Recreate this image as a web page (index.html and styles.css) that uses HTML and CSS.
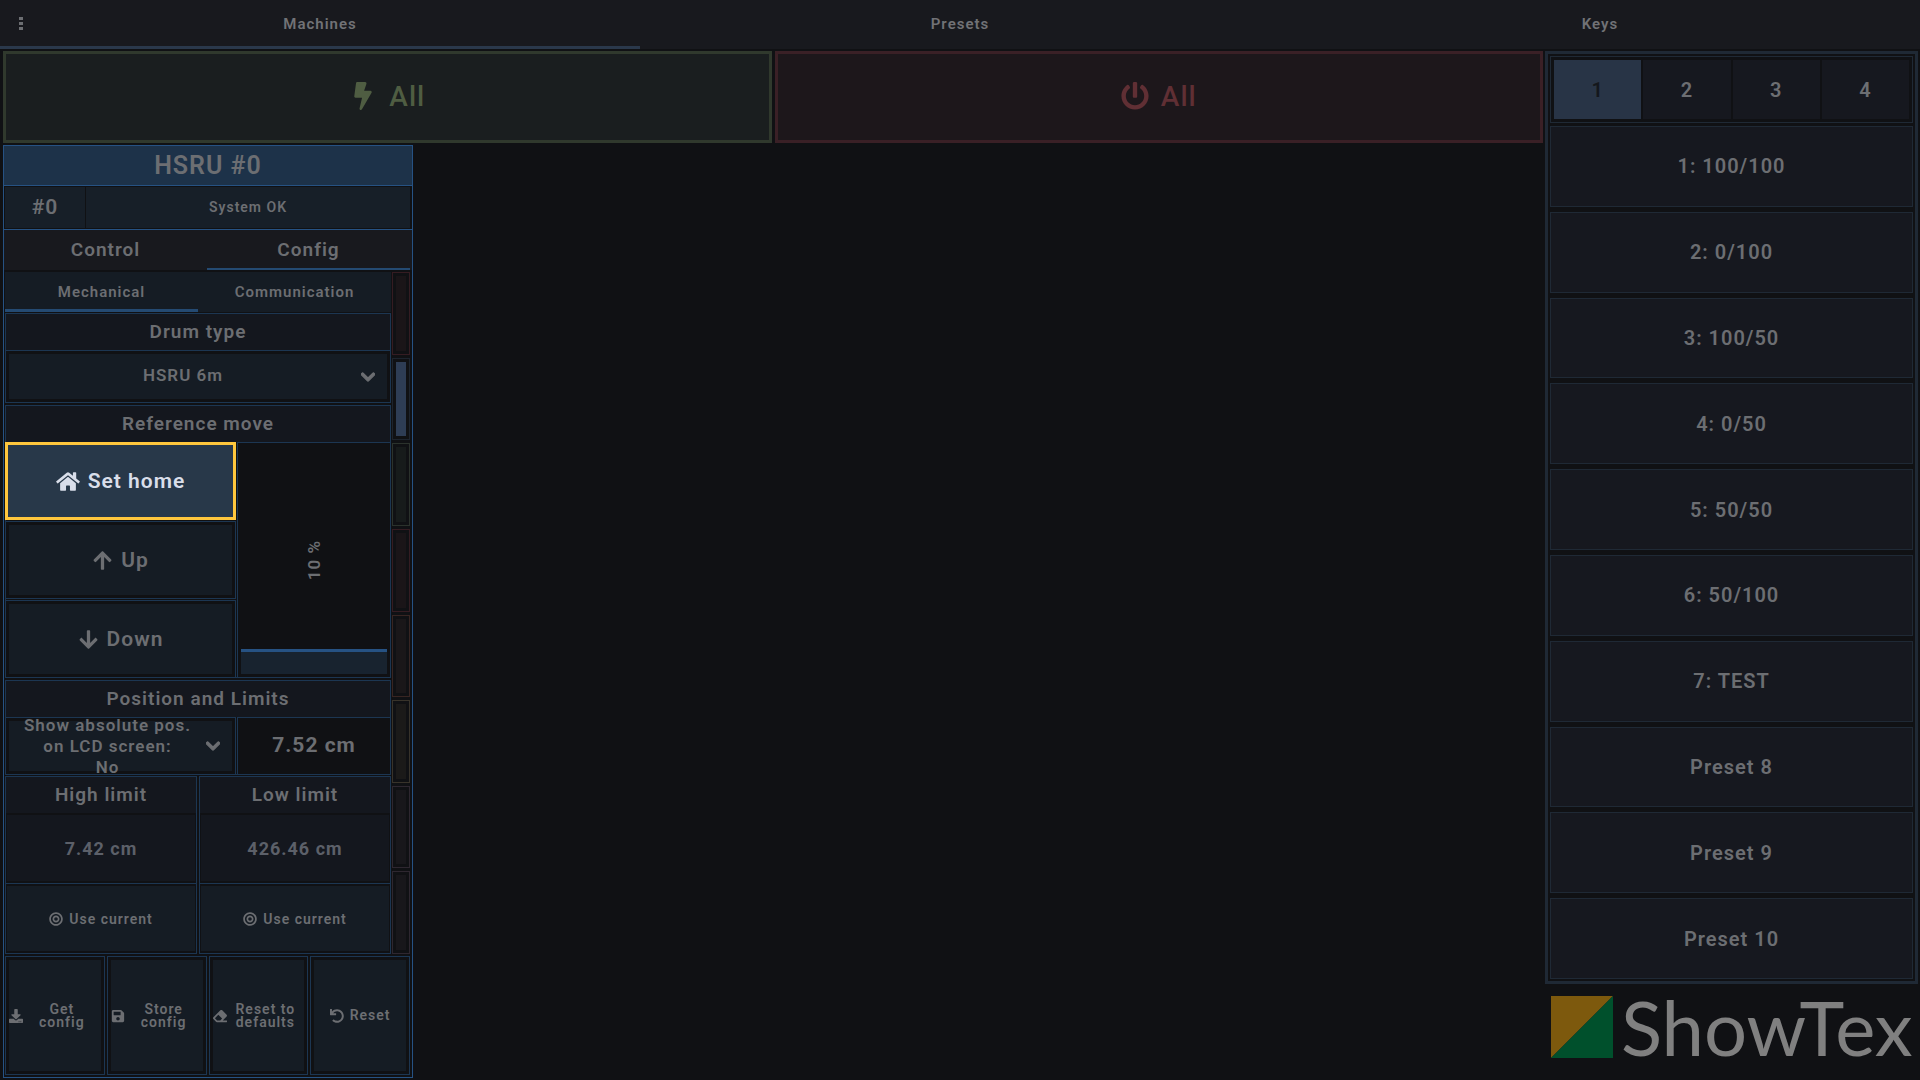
FILE: index.html
```html
<!DOCTYPE html>
<html lang="en">
<head>
    <meta charset="UTF-8">
    <meta name="viewport" content="width=device-width, initial-scale=1.0">
    <title>ShowTex</title>
    <link rel="stylesheet" href="styles.css">
</head>
<body>
    <svg class="sprite" aria-hidden="true">
        <symbol id="bolt" viewBox="0 0 320 512"><path d="M296 160H180.6l42.6-129.8C227.2 15 215.7 0 200 0H56C44 0 33.8 8.9 32.2 20.8l-32 240C-1.7 275.2 9.5 288 24 288h118.7L96.6 482.5c-3.6 15.2 8 29.5 23.3 29.5 8.4 0 16.4-4.4 20.8-12l176-304c9.3-15.9-2.2-36-20.7-36z"/></symbol>
        <symbol id="power" viewBox="0 0 512 512"><path d="M400 54.1c63 45 104 118.6 104 201.9 0 136.8-110.8 247.7-247.5 248C120 504.3 8.2 393 8 256.4 7.9 173.1 48.9 99.3 111.8 54.2c11.7-8.3 28-4.8 35 7.7L162.6 90c5.9 10.5 3.1 23.8-6.6 31-41.5 30.8-68 79.6-68 134.9-.1 92.3 74.5 168.1 168 168.1 91.6 0 168.6-74.2 168-169.1-.3-51.8-24.7-101.8-68.1-134-9.7-7.2-12.4-20.5-6.5-30.9l15.8-28.1c7-12.4 23.2-16.1 34.8-7.8zM296 264V24c0-13.3-10.7-24-24-24h-32c-13.3 0-24 10.7-24 24v240c0 13.3 10.7 24 24 24h32c13.3 0 24-10.7 24-24z"/></symbol>
        <symbol id="home" viewBox="0 0 576 512"><path d="M280.37 148.26L96 300.11V464a16 16 0 0 0 16 16l112.06-.29a16 16 0 0 0 15.92-16V368a16 16 0 0 1 16-16h64a16 16 0 0 1 16 16v95.64a16 16 0 0 0 16 16.05L464 480a16 16 0 0 0 16-16V300L295.67 148.26a12.19 12.19 0 0 0-15.3 0zM571.6 251.47L488 182.56V44.05a12 12 0 0 0-12-12h-56a12 12 0 0 0-12 12v72.61L318.47 43a48 48 0 0 0-61 0L4.34 251.47a12 12 0 0 0-1.6 16.9l25.5 31A12 12 0 0 0 45.15 301l235.22-193.74a12.19 12.19 0 0 1 15.3 0L530.9 301a12 12 0 0 0 16.9-1.6l25.5-31a12 12 0 0 0-1.7-16.93z"/></symbol>
        <symbol id="arrow-up" viewBox="0 0 448 512"><path d="M34.9 289.5l-22.2-22.2c-9.4-9.4-9.4-24.6 0-33.9L207 39c9.4-9.4 24.6-9.4 33.9 0l194.3 194.3c9.4 9.4 9.4 24.6 0 33.9L413 289.4c-9.5 9.5-25 9.3-34.3-.4L264 168.6V456c0 13.3-10.7 24-24 24h-32c-13.3 0-24-10.7-24-24V168.6L69.2 289.1c-9.3 9.8-24.8 10-34.3.4z"/></symbol>
        <symbol id="arrow-down" viewBox="0 0 448 512"><path d="M413.1 222.5l22.2 22.2c9.4 9.4 9.4 24.6 0 33.9L241 473c-9.4 9.4-24.6 9.4-33.9 0L12.7 278.6c-9.4-9.4-9.4-24.6 0-33.9l22.2-22.2c9.5-9.5 25-9.3 34.3.4L184 343.4V56c0-13.3 10.7-24 24-24h32c13.3 0 24 10.7 24 24v287.4l114.8-120.5c9.3-9.8 24.8-10 34.3-.4z"/></symbol>
        <symbol id="bullseye" viewBox="0 0 496 512"><path d="M248 8C111.03 8 0 119.03 0 256s111.03 248 248 248 248-111.03 248-248S384.97 8 248 8zm0 432c-101.69 0-184-82.29-184-184 0-101.69 82.29-184 184-184 101.69 0 184 82.29 184 184 0 101.69-82.29 184-184 184zm0-312c-70.69 0-128 57.31-128 128s57.31 128 128 128 128-57.31 128-128-57.31-128-128-128zm0 192c-35.29 0-64-28.71-64-64s28.71-64 64-64 64 28.71 64 64-28.71 64-64 64z"/></symbol>
        <symbol id="download" viewBox="0 0 512 512"><path d="M216 0h80c13.3 0 24 10.7 24 24v168h87.7c17.8 0 26.7 21.5 14.1 34.1L269.7 378.3c-7.5 7.5-19.8 7.5-27.3 0L90.1 226.1c-12.6-12.6-3.7-34.1 14.1-34.1H192V24c0-13.3 10.7-24 24-24zm296 376v112c0 13.3-10.7 24-24 24H24c-13.3 0-24-10.7-24-24V376c0-13.3 10.7-24 24-24h146.7l49 49c20.1 20.1 52.5 20.1 72.6 0l49-49H488c13.3 0 24 10.7 24 24zm-124 88c0-11-9-20-20-20s-20 9-20 20 9 20 20 20 20-9 20-20zm64 0c0-11-9-20-20-20s-20 9-20 20 9 20 20 20 20-9 20-20z"/></symbol>
        <symbol id="save" viewBox="0 0 448 512"><path d="M433.941 129.941l-83.882-83.882A48 48 0 0 0 316.118 32H48C21.49 32 0 53.49 0 80v352c0 26.51 21.49 48 48 48h352c26.51 0 48-21.49 48-48V163.882a48 48 0 0 0-14.059-33.941zM224 416c-35.346 0-64-28.654-64-64 0-35.346 28.654-64 64-64s64 28.654 64 64c0 35.346-28.654 64-64 64zm96-304.52V212c0 6.627-5.373 12-12 12H76c-6.627 0-12-5.373-12-12V108c0-6.627 5.373-12 12-12h228.52c3.183 0 6.235 1.264 8.485 3.515l3.48 3.48A11.996 11.996 0 0 1 320 111.48z"/></symbol>
        <symbol id="eraser" viewBox="0 0 512 512"><path d="M497.941 273.941c18.745-18.745 18.745-49.137 0-67.882l-160-160c-18.745-18.745-49.136-18.746-67.883 0l-256 256c-18.745 18.745-18.745 49.137 0 67.882l96 96A48.004 48.004 0 0 0 144 480h356c6.627 0 12-5.373 12-12v-40c0-6.627-5.373-12-12-12H355.883l142.058-142.059zm-302.627-62.627l137.373 137.373L265.373 416H150.628l-80-80 124.686-124.686z"/></symbol>
        <symbol id="undo" viewBox="0 0 512 512"><path d="M212.333 224.333H12c-6.627 0-12-5.373-12-12V12C0 5.373 5.373 0 12 0h48c6.627 0 12 5.373 12 12v78.112C117.773 39.279 184.26 7.47 258.175 8.007c136.906.994 246.448 111.623 246.157 248.532C504.041 393.258 393.12 504 256.333 504c-64.089 0-122.496-24.313-166.51-64.215-5.099-4.622-5.334-12.554-.467-17.42l33.967-33.967c4.474-4.474 11.662-4.717 16.401-.525C170.76 415.336 211.58 432 256.333 432c97.268 0 176-78.716 176-176 0-97.267-78.716-176-176-176-58.496 0-110.28 28.476-142.274 72.333h98.274c6.627 0 12 5.373 12 12v48c0 6.627-5.373 12-12 12z"/></symbol>
        <symbol id="chevron" viewBox="0 0 448 512"><path d="M207.029 381.476L12.686 187.132c-9.373-9.373-9.373-24.569 0-33.941l22.667-22.667c9.357-9.357 24.522-9.375 33.901-.04L224 284.505l154.745-154.021c9.379-9.335 24.544-9.317 33.901.04l22.667 22.667c9.373 9.373 9.373 24.569 0 33.941L240.971 381.476c-9.373 9.372-24.569 9.372-33.942 0z"/></symbol>
    </svg>

    <header class="topbar">
        <button type="button" class="menu-btn" aria-label="Menu">
            <svg class="dots" viewBox="0 0 4 14"><path d="M0 0h4v3H0zM0 5h4v3H0zM0 10h4v3H0z"/></svg>
        </button>
        <nav class="main-tabs">
            <button type="button" class="active">Machines</button>
            <button type="button">Presets</button>
            <button type="button">Keys</button>
        </nav>
    </header>

    <div class="layout">
        <main class="machines">
            <div class="all-row">
                <button type="button" class="all on"><svg class="icon"><use href="#bolt"/></svg>All</button>
                <button type="button" class="all off"><svg class="icon"><use href="#power"/></svg>All</button>
            </div>

            <section class="machine">
                <h2>HSRU #0</h2>
                <div class="status">
                    <span class="number">#0</span>
                    <span class="message">System OK</span>
                </div>
                <div class="tabs">
                    <button type="button">Control</button>
                    <button type="button" class="active">Config</button>
                </div>

                <div class="config">
                    <div class="settings">
                        <div class="subtabs">
                            <button type="button" class="active">Mechanical</button>
                            <button type="button">Communication</button>
                        </div>

                        <div class="group drum">
                            <h3><label for="drum-type">Drum type</label></h3>
                            <div class="dropdown">
                                <select id="drum-type">
                                    <option>HSRU 6m</option>
                                </select>
                                <svg class="chevron"><use href="#chevron"/></svg>
                            </div>
                        </div>

                        <div class="group reference">
                            <h3>Reference move</h3>
                            <div class="moves">
                                <div class="move-btns">
                                    <button type="button" class="cell highlight"><svg class="icon"><use href="#home"/></svg>Set home</button>
                                    <button type="button" class="cell"><svg class="icon"><use href="#arrow-up"/></svg>Up</button>
                                    <button type="button" class="cell"><svg class="icon"><use href="#arrow-down"/></svg>Down</button>
                                </div>
                                <div class="speed">
                                    <input type="range" id="speed" min="0" max="100" value="10">
                                    <label for="speed">10 %</label>
                                </div>
                            </div>
                        </div>

                        <div class="group position">
                            <h3>Position and Limits</h3>
                            <div class="position-row">
                                <div class="dropdown absolute-pos">
                                    <div class="field">
                                        <label for="absolute">Show absolute pos. on LCD screen:</label>
                                        <select id="absolute">
                                            <option>No</option>
                                            <option>Yes</option>
                                        </select>
                                    </div>
                                    <svg class="chevron"><use href="#chevron"/></svg>
                                </div>
                                <div class="current">7.52 cm</div>
                            </div>
                        </div>

                        <div class="limits">
                            <div class="limit">
                                <h3>High limit</h3>
                                <div class="value">7.42 cm</div>
                                <button type="button"><svg class="icon"><use href="#bullseye"/></svg>Use current</button>
                            </div>
                            <div class="limit">
                                <h3>Low limit</h3>
                                <div class="value">426.46 cm</div>
                                <button type="button"><svg class="icon"><use href="#bullseye"/></svg>Use current</button>
                            </div>
                        </div>
                    </div>

                    <div class="leds">
                        <span class="led red"></span>
                        <span class="led blue"></span>
                        <span class="led green"></span>
                        <span class="led red"></span>
                        <span class="led orange"></span>
                        <span class="led yellow"></span>
                        <span class="led purple"></span>
                        <span class="led purple"></span>
                    </div>
                </div>

                <div class="actions">
                    <button type="button" class="cell"><svg class="icon"><use href="#download"/></svg><span>Get config</span></button>
                    <button type="button" class="cell"><svg class="icon"><use href="#save"/></svg><span>Store config</span></button>
                    <button type="button" class="cell"><svg class="icon"><use href="#eraser"/></svg><span>Reset to defaults</span></button>
                    <button type="button" class="cell short"><svg class="icon"><use href="#undo"/></svg><span>Reset</span></button>
                </div>
            </section>
        </main>

        <aside class="side">
            <div class="presets">
                <div class="pages">
                    <button type="button" class="active">1</button>
                    <button type="button">2</button>
                    <button type="button">3</button>
                    <button type="button">4</button>
                </div>
                <div class="preset-list">
                    <button type="button">1: 100/100</button>
                    <button type="button">2: 0/100</button>
                    <button type="button">3: 100/50</button>
                    <button type="button">4: 0/50</button>
                    <button type="button">5: 50/50</button>
                    <button type="button">6: 50/100</button>
                    <button type="button">7: TEST</button>
                    <button type="button">Preset 8</button>
                    <button type="button">Preset 9</button>
                    <button type="button">Preset 10</button>
                </div>
            </div>
            <div class="logo">
                <svg class="mark" viewBox="0 0 62 62"><path fill="#7d590d" d="M0 0h62L0 62z"/><path fill="#00502c" d="M62 0v62H0z"/></svg>
                <span class="wordmark">ShowTex</span>
            </div>
        </aside>
    </div>
</body>
</html>
```
FILE: styles.css
```css
* {
    box-sizing: border-box;
}
body {
    display: flex;
    flex-direction: column;
    min-height: 100vh;
    margin: 0;
    background-color: #101114;
    color: #6c6e72;
    font-family: Roboto, sans-serif;
    font-size: 19px;
    font-weight: 600;
    letter-spacing: 1px;
}
button, select, input {
    margin: 0;
    padding: 0;
    border: none;
    background: none;
    color: inherit;
    font: inherit;
    letter-spacing: inherit;
}
button, select {
    cursor: pointer;
}
h2, h3 {
    margin: 0;
    font-size: inherit;
    font-weight: inherit;
    text-align: center;
}
svg {
    fill: currentColor;
}
.sprite {
    display: none;
}
.icon {
    flex: none;
    width: 1em;
    height: 1em;
}

/* top bar */
.topbar {
    position: relative;
    background-color: #18191e;
}
.menu-btn {
    position: absolute;
    top: 0;
    left: 0;
    width: 42px;
    height: 49px;
}
.dots {
    width: 4px;
    height: 14px;
}
.main-tabs {
    display: grid;
    grid-template-columns: repeat(3, 1fr);
}
.main-tabs button {
    height: 49px;
    padding-top: 2px;
    border-bottom: 3px solid transparent;
    font-size: 15px;
    color: #717276;
}
.main-tabs .active {
    border-color: #2a384b;
}

.layout {
    flex: 1;
    display: grid;
    grid-template-columns: 1fr 373px;
    gap: 2px;
    padding: 2px 2px 2px 3px;
}
.machines {
    display: flex;
    flex-direction: column;
    gap: 2px;
}
.all-row {
    display: grid;
    grid-template-columns: 1fr 1fr;
    gap: 3px;
}
.all {
    display: flex;
    align-items: center;
    justify-content: center;
    gap: 12px;
    height: 92px;
    padding-bottom: 2px;
    border: 3px solid;
    font-size: 28px;
    font-weight: 500;
}
.all.on {
    border-color: #30392d;
    background-color: #1a1e1f;
    color: #4f5d42;
}
.all.off {
    border-color: #3a2026;
    background-color: #1d171b;
    color: #602f34;
}

/* machine card */
.machine {
    flex: 1;
    display: flex;
    flex-direction: column;
    width: 410px;
    border: 1px solid #265283;
}
.machine h2 {
    border-bottom: 1px solid #265283;
    background-color: #1d3249;
    font-size: 25px;
    line-height: 39px;
}
.status {
    display: grid;
    grid-template-columns: 80px 1fr;
    gap: 1px;
    padding: 1px 2px 1px 1px;
    border-bottom: 1px solid #265283;
    line-height: 41px;
    text-align: center;
}
.number, .message {
    background-color: #171f28;
}
.number {
    font-size: 21px;
}
.message {
    font-size: 14px;
}
.tabs {
    display: grid;
    grid-template-columns: 1fr 1fr;
    padding-right: 2px;
    background-color: #18191e;
}
.tabs button {
    height: 40px;
    border-bottom: 2px solid transparent;
}
.tabs .active {
    border-color: #244a72;
}
.config {
    flex: 1;
    display: grid;
    grid-template-columns: 1fr 18px;
    gap: 1px;
    padding: 2px 2px 2px 1px;
}
.settings {
    display: flex;
    flex-direction: column;
    gap: 1px;
}
.subtabs {
    display: grid;
    grid-template-columns: 1fr 1fr;
    background-color: #151c24;
}
.subtabs button {
    height: 40px;
    padding-top: 2px;
    border-bottom: 3px solid transparent;
    font-size: 15px;
}
.subtabs .active {
    border-color: #244a72;
}
.group {
    border: 1px solid #1c3652;
}
.group h3, .limit h3 {
    background-color: #14171e;
    line-height: 36px;
}
.dropdown {
    display: flex;
    align-items: center;
    padding: 3px;
    border-top: 1px solid #1c3652;
    font-size: 17px;
}
.dropdown select {
    flex: 1;
    appearance: none;
    height: 45px;
    padding-right: 30px;
    padding-bottom: 3px;
    background-color: #151c24;
    text-align-last: center;
}
.chevron {
    flex: none;
    width: 14px;
    height: 16px;
    margin-left: -26px;
    margin-right: 12px;
    overflow: visible;
    stroke: currentColor;
    stroke-width: 36px;
    pointer-events: none;
}
.drum, .reference {
    margin-bottom: 1px;
}
.moves {
    display: grid;
    grid-template-columns: 231px 1fr;
    grid-template-rows: 236px;
    gap: 1px;
    margin: 0 -1px -1px;
}
.move-btns {
    display: grid;
    grid-auto-rows: 78px;
    gap: 1px;
}
.cell {
    display: flex;
    align-items: center;
    justify-content: center;
    padding: 3px;
    border: 1px solid #1c3652;
    background-color: #151c24;
    box-shadow: inset 0 0 0 3px #101114;
}
.move-btns .cell {
    gap: 8px;
    font-size: 21px;
}
.move-btns .highlight {
    border: 3px solid #ffc73d;
    background-color: #283849;
    box-shadow: none;
    color: #d9deea;
}
.highlight .icon {
    width: 24px;
}
.speed {
    position: relative;
    border: 1px solid #1c3652;
    padding: 3px;
}
/* the filled part carries a line on its top edge */
.speed input {
    display: block;
    appearance: none;
    width: 100%;
    height: 100%;
    writing-mode: vertical-lr;
    direction: rtl;
    background: linear-gradient(#265283 3px, #18232f 3px) bottom / 100% 25px no-repeat;
}
.speed input::-webkit-slider-thumb {
    appearance: none;
    width: 100%;
    height: 3px;
    background: none;
}
.speed label {
    position: absolute;
    inset: 0;
    display: flex;
    align-items: center;
    justify-content: center;
    writing-mode: sideways-lr;
    font-size: 17px;
    pointer-events: none;
}
.position-row {
    display: grid;
    grid-template-columns: 231px 1fr;
    gap: 1px;
    margin: 0 -1px -1px;
}
.absolute-pos {
    height: 58px;
    border: 1px solid #1c3652;
}
.absolute-pos .field {
    flex: 1;
    display: flex;
    flex-direction: column;
    justify-content: center;
    height: 50px;
    padding: 0 30px 0 4px;
    background-color: #151c24;
    line-height: 21px;
    text-align: center;
}
.absolute-pos select {
    flex: none;
    height: 21px;
    padding: 0;
    background: none;
}
.current {
    border: 1px solid #1c3652;
    font-size: 21px;
    font-weight: 700;
    line-height: 54px;
    text-align: center;
}
.limits {
    flex: 1;
    display: grid;
    grid-template-columns: 1fr 1fr;
    gap: 2px;
}
.limit {
    display: grid;
    grid-template-rows: auto 1fr 1fr;
    border: 1px solid #1c3652;
}
.value, .limit button {
    display: flex;
    align-items: center;
    justify-content: center;
    padding: 2px 1px;
    background: #14171e content-box;
}
.value {
    color: #5c6069;
    font-size: 18px;
    font-weight: 700;
}
.limit button {
    gap: 6px;
    border-top: 1px solid #1c3652;
    background-color: #151c24;
    font-size: 14px;
}

/* colored strip at the right of the settings */
.leds {
    display: flex;
    flex-direction: column;
    gap: 3px;
}
.led {
    flex: 1;
    padding: 3px;
    border: 1px solid;
    background-clip: content-box;
}
.led.red {
    border-color: #351c22;
    background-color: #1a1518;
}
.led.blue {
    border-color: #1d242e;
    background-color: #2e3d55;
}
.led.green {
    border-color: #2b322c;
    background-color: #171b1b;
}
.led.orange {
    border-color: #382522;
    background-color: #1a1719;
}
.led.yellow {
    border-color: #38332a;
    background-color: #1b1a19;
}
.led.purple {
    border-color: #2e2730;
    background-color: #18171b;
}
.actions {
    display: grid;
    grid-template-columns: repeat(4, 1fr);
    gap: 2px;
    padding: 0 2px 2px 1px;
    font-size: 14px;
    line-height: 13px;
}
.actions .cell {
    height: 119px;
}
.actions span {
    flex: 1;
    padding: 0 8px;
}
.actions .short {
    gap: 6px;
}
.actions .short span {
    flex: none;
    padding: 0;
}

/* presets */
.side {
    display: flex;
    flex-direction: column;
}
.presets {
    flex: 1;
    display: flex;
    flex-direction: column;
    gap: 3px;
    padding: 2px;
    border: 3px solid #1f2935;
    font-size: 20px;
}
.pages {
    display: grid;
    grid-template-columns: repeat(4, 1fr);
    gap: 2px;
    padding: 3px;
    border: 1px solid #1f2935;
}
.pages button {
    height: 59px;
    background-color: #16181f;
}
.pages .active {
    background-color: #283446;
    color: #14171c;
}
.preset-list {
    flex: 1;
    display: flex;
    flex-direction: column;
    gap: 5px;
}
.preset-list button {
    flex: 1;
    border: 1px solid #1f2935;
    background-color: #16181f;
}
.logo {
    display: flex;
    align-items: center;
    gap: 8px;
    height: 94px;
    padding: 0 6px 8px;
}
.mark {
    flex: none;
    width: 62px;
    height: 62px;
}
.wordmark {
    color: #808080;
    font-family: Lato, sans-serif;
    font-size: 76px;
    font-weight: 400;
    letter-spacing: 0;
    line-height: 62px;
}
```
